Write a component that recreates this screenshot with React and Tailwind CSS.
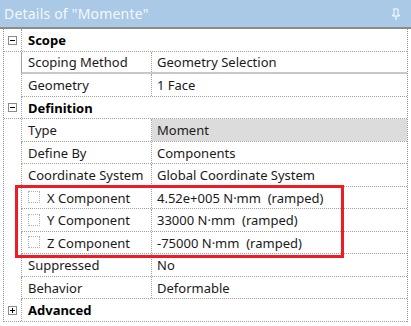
import { useState } from 'react';

const font = { fontFamily: '"Noto Sans", "Open Sans", sans-serif' };

function Expander({ open }) {
  return (
    <div className="w-[9px] h-[9px] border border-[#8a8a8a] bg-white flex items-center justify-center relative">
      <div className="w-[5px] h-px bg-black" />
      {!open && <div className="absolute w-px h-[5px] bg-black" />}
    </div>
  );
}

function Heading({ label, open = true }) {
  return (
    <div className="flex h-[22.5px] border-b border-dotted border-[#a0a0a0]">
      <div className="w-[17px] shrink-0 flex items-center justify-center pt-[1px]">
        <Expander open={open} />
      </div>
      <div className="flex-1 border-l border-dotted border-[#a0a0a0] pl-[6px] pt-[2px] flex items-center font-bold text-[13px] text-black">
        {label}
      </div>
    </div>
  );
}

function Row({ label, value, check, selected, solid }) {
  return (
    <div className="flex h-[22.5px]">
      <div className="w-[17px] shrink-0" />
      <div
        className={
          'flex-1 flex border-l border-dotted border-[#a0a0a0] border-b ' +
          (solid ? 'border-b-[#c8c8c8] border-b-2 border-solid' : 'border-b-[#a0a0a0]')
        }
      >
        <div className="w-[130px] shrink-0 flex items-center pl-[6px] pt-[2px] border-r border-dotted border-[#a0a0a0] text-[13px] text-[#1a1a1a] whitespace-nowrap overflow-hidden">
          {check && <div className="w-[12px] h-[12px] border border-dotted border-[#b0b0b0] mr-[7px] mb-[2px]" />}
          {label}
        </div>
        <div
          className={
            'flex-1 flex items-center pl-[5px] pt-[2px] text-[13px] text-[#1a1a1a] whitespace-pre ' +
            (selected ? 'bg-[#dcdcdc]' : '')
          }
        >
          {value}
        </div>
      </div>
    </div>
  );
}

export default function App() {
  const [rows] = useState([
    { label: 'X Component', value: '4.52e+005 N·mm  (ramped)' },
    { label: 'Y Component', value: '33000 N·mm  (ramped)' },
    { label: 'Z Component', value: '-75000 N·mm  (ramped)' },
  ]);

  return (
    <div className="w-[411px] h-[326px] bg-white overflow-hidden" style={font}>
      <div className="h-[29px] bg-[#a9c9e6] flex items-center justify-between px-[4px] border-b-2 border-[#8c8c8c]">
        <span className="text-[14px] text-[#f4f8fc] tracking-[0.2px]">Details of "Momente"</span>
        <svg width="10" height="12" viewBox="0 0 10 12" className="mr-[6px]">
          <path d="M2 1h5v6h1.5v1H1.5V7H3V1" fill="none" stroke="#ffffff" strokeWidth="1" />
          <path d="M5 8v4" stroke="#ffffff" strokeWidth="1" />
        </svg>
      </div>
      <div className="ml-[3px] w-[405px] border-l border-r border-dotted border-[#909090]">
        <Heading label="Scope" />
        <Row label="Scoping Method" value="Geometry Selection" solid />
        <Row label="Geometry" value="1 Face" />
        <Heading label="Definition" />
        <Row label="Type" value="Moment" selected />
        <Row label="Define By" value="Components" />
        <Row label="Coordinate System" value="Global Coordinate System" />
        <div className="relative">
          {rows.map((r) => (
            <Row key={r.label} label={r.label} value={r.value} check />
          ))}
          <div className="absolute left-[11px] top-[-2px] w-[329px] bottom-[-4px] border-[3px] border-[#ee1c24] pointer-events-none" />
        </div>
        <Row label="Suppressed" value="No" />
        <Row label="Behavior" value="Deformable" />
        <Heading label="Advanced" open={false} />
      </div>
    </div>
  );
}
